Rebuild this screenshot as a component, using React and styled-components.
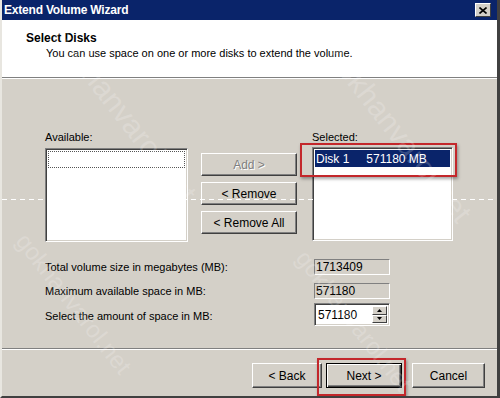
import styled, { createGlobalStyle } from "styled-components";

const Global = createGlobalStyle`
  html, body {
    margin: 0;
    padding: 0;
    width: 500px;
    height: 398px;
    overflow: hidden;
    background: #d4d0c8;
  }
  body {
    font-family: "Liberation Sans", Tahoma, Arial, sans-serif;
    font-size: 11px;
    color: #000;
  }
`;

const Window = styled.div`
  position: relative;
  width: 500px;
  height: 398px;
  box-sizing: border-box;
  display: flex;
  flex-direction: column;
  background: #d4d0c8;
  border-left: 2px solid #e8e6e0;
  border-right: 3px solid #404040;
  border-bottom: 2px solid #404040;
  overflow: hidden;
`;

const TitleBar = styled.div`
  height: 20px;
  flex: none;
  display: flex;
  align-items: center;
  justify-content: space-between;
  padding: 0 4px 0 2px;
  background: #0a246a;
  color: #fff;
  font-weight: bold;
  font-size: 12px;
  letter-spacing: -0.2px;
`;

const CloseBtn = styled.div`
  width: 14px;
  height: 12px;
  background: #d4d0c8;
  border: 1px solid;
  border-color: #fff #404040 #404040 #fff;
  display: flex;
  align-items: center;
  justify-content: center;
  margin-right: 2px;
`;

const Header = styled.div`
  height: 58px;
  flex: none;
  background: #fff;
  border-bottom: 1px solid #808080;
  box-shadow: 0 1px 0 #fff;
  padding: 11px 0 0 24px;
  box-sizing: border-box;
`;

const HeaderTitle = styled.div`
  font-weight: bold;
  font-size: 12px;
`;

const HeaderText = styled.div`
  margin: 2px 0 0 20px;
`;

const Main = styled.div`
  flex: 1;
  padding: 53px 0 0 43px;
  display: flex;
  flex-direction: column;
`;

const ListsRow = styled.div`
  display: flex;
  align-items: flex-start;
`;

const ListCol = styled.div`
  width: ${(p) => p.$w}px;
  display: flex;
  flex-direction: column;
  gap: ${(p) => p.$gap}px;
`;

const Label = styled.div`
  line-height: 13px;
`;

const ListBox = styled.div`
  height: 94px;
  background: #fff;
  box-sizing: border-box;
  border: 1px solid;
  border-color: #808080 #fff #fff #808080;
  box-shadow: inset 1px 1px #404040, inset -1px -1px #d4d0c8;
  padding: 2px;
`;

const FocusRow = styled.div`
  height: 15px;
  border: 1px dotted #555;
`;

const SelectedRow = styled.div`
  height: 17px;
  background: #0a246a;
  color: #fff;
  display: flex;
  align-items: center;
  gap: 17px;
  padding-left: 1px;
  font-size: 12px;
`;

const ButtonsCol = styled.div`
  width: 96px;
  margin: 22px 15px 0 13px;
  display: flex;
  flex-direction: column;
  gap: 6px;
`;

const Button = styled.div`
  width: ${(p) => p.$w || 96}px;
  height: ${(p) => p.$h || 23}px;
  box-sizing: border-box;
  display: flex;
  align-items: center;
  justify-content: center;
  background: #d4d0c8;
  border: 1px solid;
  border-color: ${(p) => (p.$default ? "#000" : "#fff #404040 #404040 #fff")};
  box-shadow: ${(p) =>
    p.$default
      ? "inset 1px 1px #fff, inset -1px -1px #404040, inset -2px -2px #808080"
      : "inset -1px -1px #808080, inset 1px 1px #d4d0c8"};
  color: ${(p) => (p.$disabled ? "#808080" : "#000")};
  text-shadow: ${(p) => (p.$disabled ? "1px 1px #fff" : "none")};
  font-size: 12px;
`;

const SelectedWrap = styled.div`
  position: relative;
`;

const RedBox = styled.div`
  position: absolute;
  left: ${(p) => p.$l}px;
  top: ${(p) => p.$t}px;
  width: ${(p) => p.$w}px;
  height: ${(p) => p.$h}px;
  border: 2px solid #c3272b;
  box-sizing: border-box;
  box-shadow: 1px 2px 3px rgba(0, 0, 0, 0.35);
  pointer-events: none;
`;

const Form = styled.div`
  margin-top: 17px;
  display: grid;
  grid-template-columns: 269px 76px;
  row-gap: 8px;
  align-items: center;
`;

const ValueBox = styled.div`
  height: 16px;
  box-sizing: border-box;
  border: 1px solid;
  border-color: #808080 #fff #fff #808080;
  display: flex;
  align-items: center;
  padding-left: 1px;
  font-size: 12px;
`;

const Spin = styled.div`
  height: 23px;
  margin-top: -4px;
  box-sizing: border-box;
  background: #fff;
  border: 1px solid;
  border-color: #808080 #fff #fff #808080;
  box-shadow: inset 1px 1px #404040, inset -1px -1px #d4d0c8;
  display: flex;
  align-items: center;
  padding: 2px 2px 2px 3px;
  font-size: 12px;
`;

const SpinText = styled.div`
  flex: 1;
`;

const SpinArrows = styled.div`
  width: 15px;
  height: 17px;
  display: flex;
  flex-direction: column;
`;

const Arrow = styled.div`
  flex: 1;
  background: #d4d0c8;
  border: 1px solid;
  border-color: #fff #404040 #404040 #fff;
  display: flex;
  align-items: center;
  justify-content: center;
`;

const Footer = styled.div`
  height: 48px;
  flex: none;
  border-top: 1px solid #808080;
  box-shadow: inset 0 1px #fff;
  display: flex;
  justify-content: flex-end;
  align-items: flex-start;
  padding: 14px 12px 0 0;
  box-sizing: border-box;
`;

const NextWrap = styled.div`
  position: relative;
  margin: 0 10px 0 4px;
`;

const Dashes = styled.div`
  position: absolute;
  left: 0;
  right: 0;
  top: 199px;
  height: 1px;
  background: repeating-linear-gradient(90deg, #fff 0 5px, transparent 5px 9px);
  pointer-events: none;
`;

const Watermark = styled.div`
  position: absolute;
  left: ${(p) => p.$x}px;
  top: ${(p) => p.$y}px;
  transform: rotate(52deg);
  transform-origin: left top;
  font-size: ${(p) => p.$size}px;
  color: rgba(255, 255, 255, 0.2);
  white-space: nowrap;
  pointer-events: none;
`;

const TriUp = () => (
  <svg width="5" height="3" viewBox="0 0 5 3"><path d="M2.5 0L5 3H0z" fill="#000" /></svg>
);
const TriDown = () => (
  <svg width="5" height="3" viewBox="0 0 5 3"><path d="M0 0h5L2.5 3z" fill="#000" /></svg>
);

export default function App() {
  return (
    <Window>
      <Global />
      <TitleBar>
        <span>Extend Volume Wizard</span>
        <CloseBtn>
          <svg width="8" height="7" viewBox="0 0 8 7">
            <path d="M0.5 0.5L7.5 6.5M7.5 0.5L0.5 6.5" stroke="#000" strokeWidth="1.6" />
          </svg>
        </CloseBtn>
      </TitleBar>
      <Header>
        <HeaderTitle>Select Disks</HeaderTitle>
        <HeaderText>You can use space on one or more disks to extend the volume.</HeaderText>
      </Header>
      <Main>
        <ListsRow>
          <ListCol $w={143} $gap={4}>
            <Label>Available:</Label>
            <ListBox>
              <FocusRow />
            </ListBox>
          </ListCol>
          <ButtonsCol>
            <Button $disabled>Add &gt;</Button>
            <Button>&lt; Remove</Button>
            <Button>&lt; Remove All</Button>
          </ButtonsCol>
          <ListCol $w={141} $gap={3}>
            <Label>Selected:</Label>
            <SelectedWrap>
              <ListBox>
                <SelectedRow>
                  <span>Disk 1</span>
                  <span>571180 MB</span>
                </SelectedRow>
              </ListBox>
              <RedBox $l={-12} $t={-4} $w={157} $h={34} />
            </SelectedWrap>
          </ListCol>
        </ListsRow>
        <Form>
          <Label>Total volume size in megabytes (MB):</Label>
          <ValueBox>1713409</ValueBox>
          <Label>Maximum available space in MB:</Label>
          <ValueBox>571180</ValueBox>
          <Label>Select the amount of space in MB:</Label>
          <Spin>
            <SpinText>571180</SpinText>
            <SpinArrows>
              <Arrow><TriUp /></Arrow>
              <Arrow><TriDown /></Arrow>
            </SpinArrows>
          </Spin>
        </Form>
      </Main>
      <Footer>
        <Button $w={70} $h={25}>&lt; Back</Button>
        <NextWrap>
          <Button $w={76} $h={25} $default>Next &gt;</Button>
          <RedBox $l={-9} $t={-5} $w={89} $h={38} />
        </NextWrap>
        <Button $w={73} $h={25}>Cancel</Button>
      </Footer>
      <Dashes />
      <Watermark $x={70} $y={20} $size={30}>gokhanvarol.net</Watermark>
      <Watermark $x={345} $y={40} $size={30}>gokhanvarol.net</Watermark>
      <Watermark $x={30} $y={228} $size={24}>gokhanvarol.net</Watermark>
      <Watermark $x={310} $y={245} $size={24}>gokhanvarol.net</Watermark>
    </Window>
  );
}
